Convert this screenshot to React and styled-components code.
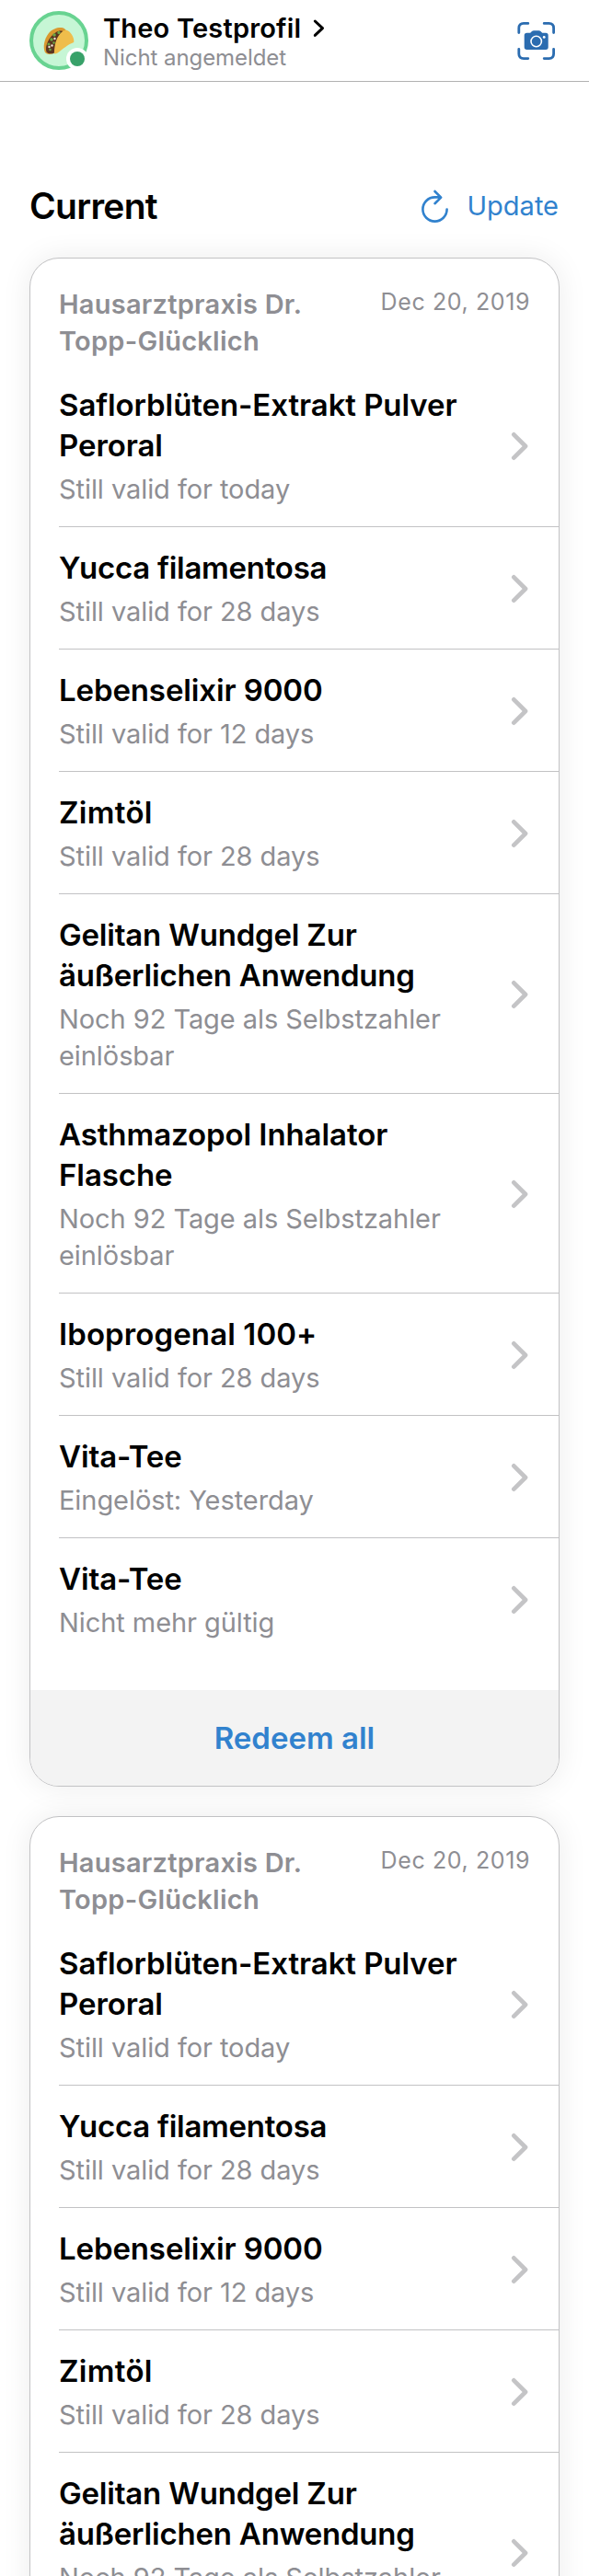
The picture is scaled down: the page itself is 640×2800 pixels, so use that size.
import React from "react";
import styled, { createGlobalStyle } from "styled-components";

const Global = createGlobalStyle`
  body { margin: 0; background: #fff; font-family: Inter, "Liberation Sans", sans-serif; }
  * { box-sizing: border-box; }
`;

const Screen = styled.div`
  width: 640px;
  height: 2800px;
  overflow: hidden;
  background: #fff;
`;

const TopBar = styled.header`
  height: 89px;
  border-bottom: 1px solid #b2b2b2;
  padding: 12px 32px 0;
  display: flex;
  align-items: flex-start;
`;

const Avatar = styled.svg`
  width: 64px;
  height: 64px;
  flex: none;
`;

const Profile = styled.div`
  flex: 1;
  padding: 1px 0 0 16px;
`;

const ProfileName = styled.div`
  display: flex;
  align-items: center;
  gap: 13px;
  height: 36px;
  font-size: 29px;
  line-height: 36px;
  font-weight: 600;
  letter-spacing: 0.19px;
  color: #000;
`;

const ProfileStatus = styled.div`
  margin-top: -1px;
  font-size: 24px;
  line-height: 30px;
  letter-spacing: -0.07px;
  color: #8e8e93;
`;

const ScanIcon = styled.svg`
  width: 42px;
  height: 42px;
  margin: 11px 5px 0 0;
  flex: none;
`;

const SectionHead = styled.div`
  height: 60px;
  margin: 105px 32px 0;
  display: flex;
  justify-content: space-between;
  align-items: center;
`;

const SectionTitle = styled.h2`
  margin: 0;
  font-size: 39px;
  line-height: 60px;
  font-weight: 600;
  letter-spacing: -0.7px;
`;

const UpdateButton = styled.div`
  display: flex;
  align-items: center;
  gap: 21px;
  padding-right: 1px;
  font-size: 29px;
  line-height: 40px;
  color: #3182ce;
`;

const Cards = styled.div`
  display: flex;
  flex-direction: column;
  gap: 32px;
  padding: 26px 32px 0;
`;

const Card = styled.section`
  height: 1662px;
  flex: none;
  border: 1px solid #c2c2c4;
  border-radius: 32px;
  overflow: hidden;
  background: #fff;
  box-shadow: 0 0 32px rgba(0, 0, 0, 0.08);
`;

const CardHead = styled.div`
  height: 115px;
  padding: 29px 31px 0;
  display: flex;
  justify-content: space-between;
  align-items: flex-start;
  color: #8e8e93;
`;

const Practice = styled.div`
  width: 300px;
  margin-top: 1px;
  font-size: 29px;
  line-height: 40px;
  font-weight: 600;
  letter-spacing: 0.24px;
`;

const IssueDate = styled.div`
  font-size: 25px;
  line-height: 36px;
  letter-spacing: 0.6px;
`;

const Row = styled.div`
  margin-left: 31px;
  padding: 22px 33px 20px 0;
  display: flex;
  align-items: center;
  justify-content: space-between;
  border-bottom: ${(p) => (p.$last ? "0" : "1px solid #c2c2c4")};
`;

const RowText = styled.div`
  width: 450px;
`;

const RowTitle = styled.div`
  font-size: 33px;
  line-height: 44px;
  font-weight: 600;
  letter-spacing: ${(p) => p.$tracking}px;
  color: #000;
  white-space: pre-line;
`;

const RowStatus = styled.div`
  margin-top: 6px;
  font-size: 29px;
  line-height: 40px;
  letter-spacing: -0.07px;
  color: #8e8e93;
  white-space: pre-line;
`;

const Redeem = styled.div`
  margin-top: 33px;
  height: 104px;
  background: #f3f3f3;
  color: #3182ce;
  font-size: 33px;
  line-height: 104px;
  font-weight: 600;
  text-align: center;
`;

const items = [
  { title: "Saflorblüten-Extrakt Pulver\nPeroral", status: "Still valid for today", tracking: -0.08 },
  { title: "Yucca filamentosa", status: "Still valid for 28 days", tracking: -0.26 },
  { title: "Lebenselixir 9000", status: "Still valid for 12 days", tracking: -0.12 },
  { title: "Zimtöl", status: "Still valid for 28 days", tracking: 0.3 },
  { title: "Gelitan Wundgel Zur\näußerlichen Anwendung", status: "Noch 92 Tage als Selbstzahler\neinlösbar", tracking: -0.2 },
  { title: "Asthmazopol Inhalator\nFlasche", status: "Noch 92 Tage als Selbstzahler\neinlösbar", tracking: -0.08 },
  { title: "Iboprogenal 100+", status: "Still valid for 28 days", tracking: 0.1 },
  { title: "Vita-Tee", status: "Eingelöst: Yesterday", tracking: -0.1 },
  { title: "Vita-Tee", status: "Nicht mehr gültig", tracking: -0.1 },
];

const RowChevron = () => (
  <svg width="20" height="32" viewBox="0 0 20 32" fill="none" stroke="#c4c4c6" strokeWidth="4.7" strokeLinecap="round" strokeLinejoin="round">
    <path d="M4.300 3.300 L17 16 L4.300 28.700" />
  </svg>
);

const Prescription = () => (
  <Card>
    <CardHead>
      <Practice>Hausarztpraxis Dr. Topp-Glücklich</Practice>
      <IssueDate>Dec 20, 2019</IssueDate>
    </CardHead>
    {items.map((item, i) => (
      <Row key={i} $last={i === items.length - 1}>
        <RowText>
          <RowTitle $tracking={item.tracking}>{item.title}</RowTitle>
          <RowStatus>{item.status}</RowStatus>
        </RowText>
        <RowChevron />
      </Row>
    ))}
    <Redeem>Redeem all</Redeem>
  </Card>
);

export default function App() {
  return (
    <Screen>
      <Global />
      <TopBar>
        <Avatar viewBox="0 0 64 64">
          <circle cx="32" cy="32" r="30" fill="#c6f6d5" stroke="#68d391" strokeWidth="4" />
          <path d="M17 45 C14.500 40 15.500 31 21 24 C25 19 31 17.500 35 18 C38 18.500 39.500 20 40 22 L28 45 C24 47.500 19 47.500 17 45 Z" fill="#d9992f" />
          <path d="M18.500 44.500 C16.500 38 21 28 29 23 C32 21 36 21 38 23 L30 33 L26.500 46 C23 46.500 20 46.500 18.500 44.500 Z" fill="#5b3420" />
          <g fill="#6aa545">
            <circle cx="32" cy="23.500" r="1.700" />
            <circle cx="27" cy="26" r="1.800" />
            <circle cx="24" cy="31" r="1.700" />
            <circle cx="21" cy="36" r="1.600" />
            <circle cx="26.500" cy="34.500" r="1.300" />
            <circle cx="22.500" cy="42" r="1.300" />
          </g>
          <g fill="#f3e4d6">
            <circle cx="27.500" cy="30" r="1.200" />
            <circle cx="21.500" cy="39" r="1.200" />
            <circle cx="24.500" cy="37.500" r="1.200" />
          </g>
          <path d="M27 46.300 C27 38 28.500 30 33.500 24.500 C36 21.500 40 19.500 42 21.500 C46 24 49 30 48.200 34 C44 35.500 38 39.500 33.300 43.500 C30.500 45.700 28.500 46.800 27 46.300 Z" fill="#efbd4b" />
          <circle cx="52" cy="52" r="12" fill="#fff" />
          <circle cx="52" cy="52" r="8" fill="#38a169" />
        </Avatar>
        <Profile>
          <ProfileName>
            <span>Theo Testprofil</span>
            <svg width="14" height="22" viewBox="0 0 14 22" fill="none" stroke="#000" strokeWidth="3" strokeLinecap="round" strokeLinejoin="round">
              <path d="M2.300 3 L10.500 10.700 L2.300 18.400" />
            </svg>
          </ProfileName>
          <ProfileStatus>Nicht angemeldet</ProfileStatus>
        </Profile>
        <ScanIcon viewBox="0 0 42 42" fill="none" stroke="#2b6cb0" strokeWidth="2.800" strokeLinecap="round">
          <path d="M2.800 12.500 V7.500 Q2.800 2.400 8 2.400 H12.800 M30.200 2.400 H35.500 Q40.600 2.400 40.600 7.500 V12.500 M40.600 30.300 V35.500 Q40.600 40.600 35.500 40.600 H30.200 M12.800 40.600 H8 Q2.800 40.600 2.800 35.500 V30.300" />
          <path d="M11.500 12.700 H15.200 L17 11 Q17.800 10.300 19 10.300 H24.500 Q25.700 10.300 26.500 11 L28.200 12.700 H32 Q34.700 12.700 34.700 15.400 V28.300 Q34.700 31 32 31 H11.500 Q8.700 31 8.700 28.300 V15.400 Q8.700 12.700 11.500 12.700 Z" fill="#2b6cb0" stroke="none" />
          <circle cx="21.700" cy="22" r="5.700" stroke="#fff" strokeWidth="1.600" />
          <circle cx="30.200" cy="17.400" r="1.400" fill="#fff" stroke="none" />
        </ScanIcon>
      </TopBar>
      <SectionHead>
        <SectionTitle>Current</SectionTitle>
        <UpdateButton>
          <svg width="32" height="38" viewBox="0 0 32 38" fill="none" stroke="#3182ce" strokeWidth="2.600" strokeLinecap="round" strokeLinejoin="round">
            <path d="M23.800 9.400 H17.500 A13.100 13.100 0 1 0 30.600 22.500 M17.500 3 L24.200 9.600 L17.500 16.200" />
          </svg>
          <span>Update</span>
        </UpdateButton>
      </SectionHead>
      <Cards>
        <Prescription />
        <Prescription />
      </Cards>
    </Screen>
  );
}
